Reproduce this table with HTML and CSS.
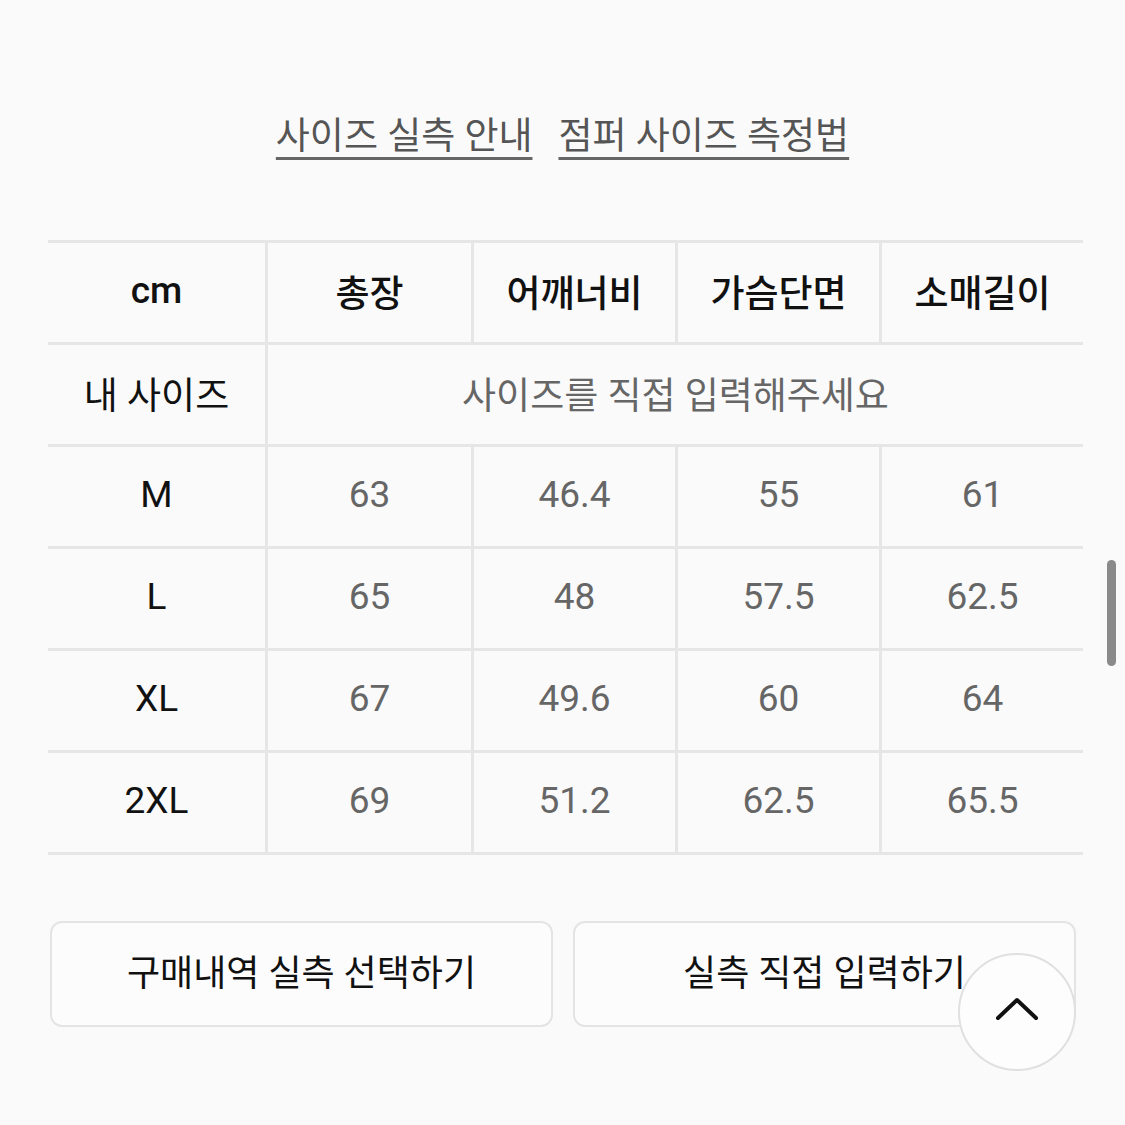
FILE: index.html
```html
<!DOCTYPE html>
<html lang="ko">
<head>
<meta charset="utf-8">
<link rel="stylesheet" href="styles.css">
</head>
<body>
<div class="page">
  <div class="links">
    <a class="link">사이즈 실측 안내</a>
    <a class="link">점퍼 사이즈 측정법</a>
  </div>

  <div class="table">
    <div class="row head">
      <div class="cell">cm</div>
      <div class="cell">총장</div>
      <div class="cell">어깨너비</div>
      <div class="cell">가슴단면</div>
      <div class="cell">소매길이</div>
    </div>
    <div class="row mine">
      <div class="cell label">내 사이즈</div>
      <div class="cell span">사이즈를 직접 입력해주세요</div>
    </div>
    <div class="row">
      <div class="cell label">M</div>
      <div class="cell val">63</div>
      <div class="cell val">46.4</div>
      <div class="cell val">55</div>
      <div class="cell val">61</div>
    </div>
    <div class="row">
      <div class="cell label">L</div>
      <div class="cell val">65</div>
      <div class="cell val">48</div>
      <div class="cell val">57.5</div>
      <div class="cell val">62.5</div>
    </div>
    <div class="row">
      <div class="cell label">XL</div>
      <div class="cell val">67</div>
      <div class="cell val">49.6</div>
      <div class="cell val">60</div>
      <div class="cell val">64</div>
    </div>
    <div class="row last">
      <div class="cell label">2XL</div>
      <div class="cell val">69</div>
      <div class="cell val">51.2</div>
      <div class="cell val">62.5</div>
      <div class="cell val">65.5</div>
    </div>
  </div>

  <div class="buttons">
    <button class="btn">구매내역 실측 선택하기</button>
    <button class="btn">실측 직접 입력하기</button>
  </div>

  <button class="top-btn" aria-label="맨 위로">
    <svg width="44" height="26" viewBox="0 0 44 26"><path d="M3 22 L22 4 L41 22" fill="none" stroke="#111" stroke-width="4" stroke-linecap="round" stroke-linejoin="round"/></svg>
  </button>
  <div class="scrollbar"></div>
</div>
</body>
</html>
```

FILE: styles.css
```css
html, body {
  margin: 0;
  padding: 0;
  background: #fafafa;
}
body {
  font-family: "Roboto", "Noto Sans CJK KR", sans-serif;
  color: #111;
  width: 1125px;
  height: 1125px;
  overflow: hidden;
}
.page {
  position: relative;
  width: 1125px;
  height: 1125px;
  padding-top: 110px;
  box-sizing: border-box;
}
.links {
  display: flex;
  justify-content: center;
  gap: 26px;
  font-size: 37px;
  line-height: 54px;
  height: 54px;
}
.link {
  color: #555;
  text-decoration: underline;
  text-decoration-thickness: 3px;
  text-underline-offset: 8px;
  text-decoration-color: #666;
}
.table {
  margin: 76px 42px 0 48px;
  display: flex;
  flex-direction: column;
}
.row {
  display: grid;
  grid-template-columns: 217px 206px 204px 204px 204px;
  height: 102px;
  border-top: 3px solid #e6e6e6;
  box-sizing: border-box;
}
.row.last {
  height: 105px;
  border-bottom: 3px solid #e6e6e6;
}
.cell {
  display: flex;
  align-items: center;
  justify-content: center;
  font-size: 37px;
  border-left: 3px solid #e6e6e6;
  padding-bottom: 4px;
}
.cell:first-child {
  border-left: none;
}
.head .cell {
  color: #111;
  font-weight: 500;
}
.label {
  color: #111;
}
.val {
  color: #666;
}
.mine .span {
  grid-column: 2 / 6;
  color: #666;
}
.buttons {
  display: flex;
  gap: 20px;
  margin: 66px 48px 0 50px;
}
.btn {
  flex: 0 0 503px;
  height: 106px;
  border: 2px solid #e4e4e4;
  border-radius: 12px;
  background: #fcfcfc;
  font-family: "Roboto", "Noto Sans CJK KR", sans-serif;
  font-size: 36px;
  color: #111;
  padding: 0 0 8px;
}
.top-btn {
  position: absolute;
  left: 958px;
  top: 953px;
  width: 118px;
  height: 118px;
  border-radius: 50%;
  border: 2px solid #e0e0e0;
  background: #fdfdfd;
  display: flex;
  align-items: center;
  justify-content: center;
  padding: 0 0 6px;
}
.scrollbar {
  position: absolute;
  left: 1107px;
  top: 560px;
  width: 9px;
  height: 106px;
  border-radius: 5px;
  background: #8a8a8a;
}
```
